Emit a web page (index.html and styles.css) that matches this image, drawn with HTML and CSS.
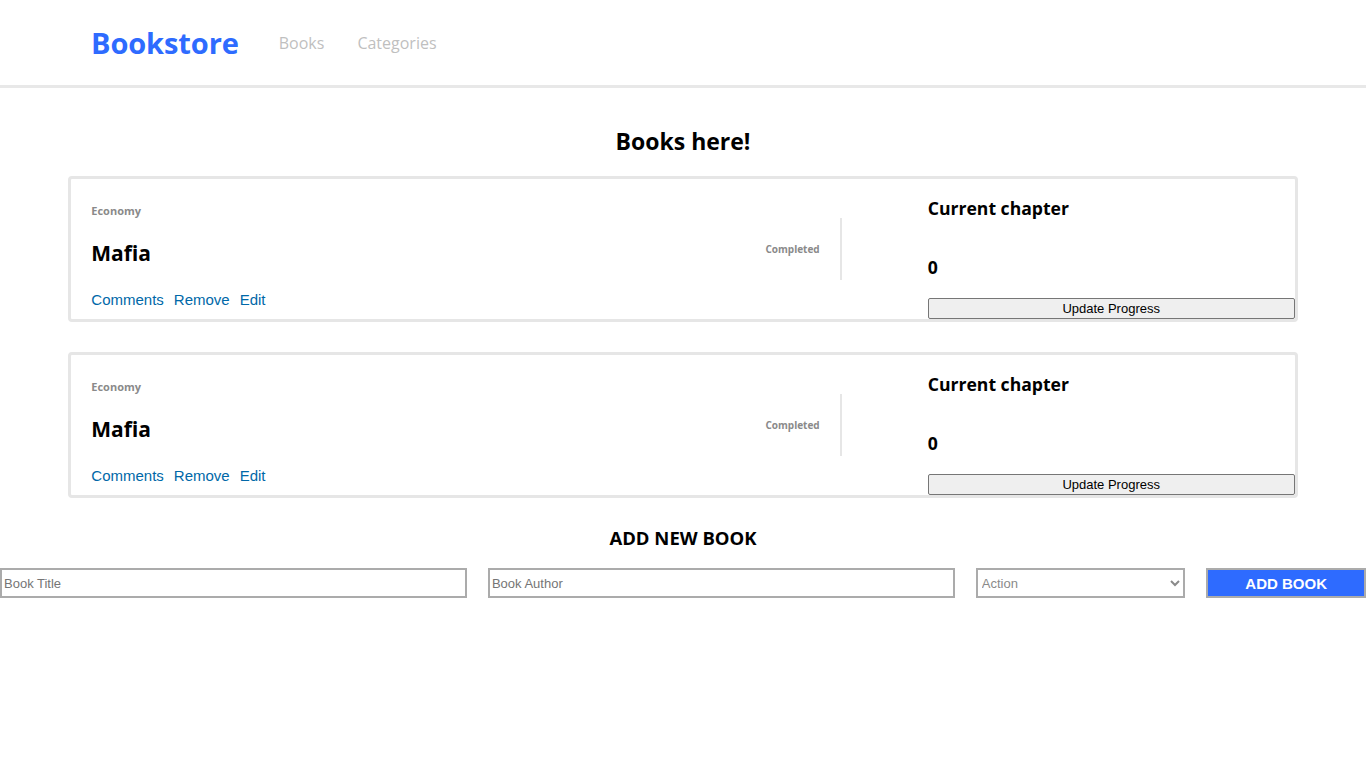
FILE: index.html
```html
<!DOCTYPE html>
<html lang="en">
<head>
<meta charset="utf-8">
<title>Bookstore</title>
<link rel="stylesheet" href="styles.css">
</head>
<body>
<header class="header">
  <a class="logo" href="#">Bookstore</a>
  <nav class="nav">
    <a href="#">Books</a>
    <a href="#">Categories</a>
  </nav>
</header>
<main class="main">
  <h1 class="page-title">Books here!</h1>
  <ul class="book-list">
    <li class="book">
      <div class="book-info">
        <span class="category">Economy</span>
        <h2 class="book-title">Mafia</h2>
        <div class="actions">
          <a href="#">Comments</a>
          <a href="#">Remove</a>
          <a href="#">Edit</a>
        </div>
      </div>
      <div class="status">Completed</div>
      <div class="divider"></div>
      <div class="chapter">
        <h3 class="chapter-label">Current chapter</h3>
        <p class="chapter-num">0</p>
        <button class="update-btn" type="button">Update Progress</button>
      </div>
    </li>
    <li class="book">
      <div class="book-info">
        <span class="category">Economy</span>
        <h2 class="book-title">Mafia</h2>
        <div class="actions">
          <a href="#">Comments</a>
          <a href="#">Remove</a>
          <a href="#">Edit</a>
        </div>
      </div>
      <div class="status">Completed</div>
      <div class="divider"></div>
      <div class="chapter">
        <h3 class="chapter-label">Current chapter</h3>
        <p class="chapter-num">0</p>
        <button class="update-btn" type="button">Update Progress</button>
      </div>
    </li>
  </ul>
  <section class="add-book">
    <h2 class="add-title">ADD NEW BOOK</h2>
    <form class="add-form">
      <input class="field field-title" type="text" placeholder="Book Title">
      <input class="field field-author" type="text" placeholder="Book Author">
      <select class="field field-select">
        <option value="" selected>Action</option>
        <option>Economy</option>
        <option>Fiction</option>
      </select>
      <button class="add-btn" type="button">ADD BOOK</button>
    </form>
  </section>
</main>
</body>
</html>
```

FILE: styles.css
```css
* {
  box-sizing: border-box;
}

body {
  margin: 0;
  font-family: "Open Sans", "DejaVu Sans", sans-serif;
  color: #000;
  background: #fff;
}

.header {
  display: flex;
  align-items: center;
  height: 88px;
  padding: 0 0 0 91px;
  border-bottom: 3px solid #e8e8e8;
}

.logo {
  font-size: 29px;
  font-weight: 700;
  color: #2e6bff;
  text-decoration: none;
  letter-spacing: -0.1px;
}

.nav {
  display: flex;
  gap: 33px;
  margin-left: 40px;
}

.nav a {
  font-size: 16px;
  color: #bfbfbf;
  text-decoration: none;
}

.main {
  padding-top: 39px;
}

.page-title {
  margin: 0 0 21px;
  text-align: center;
  font-size: 23px;
  line-height: 28px;
  font-weight: 700;
}

.book-list {
  list-style: none;
  margin: 0 auto;
  padding: 0;
  width: 90%;
  display: flex;
  flex-direction: column;
  gap: 30px;
}

.book {
  display: flex;
  align-items: center;
  height: 146px;
  border: 3px solid #e6e6e6;
  border-radius: 4px;
  padding-left: 20px;
}

.book-info {
  flex: 1;
  display: flex;
  flex-direction: column;
  align-self: stretch;
  padding-top: 25px;
}

.category {
  font-size: 11px;
  line-height: 14px;
  font-weight: 700;
  color: #8a8a8a;
}

.book-title {
  margin: 21px 0 0;
  font-size: 21px;
  line-height: 28px;
  font-weight: 700;
}

.actions {
  display: flex;
  gap: 10px;
  margin-top: 24px;
}

.actions a {
  font-family: "Liberation Sans", Arial, sans-serif;
  font-size: 15px;
  color: #0068a8;
  text-decoration: none;
}

.status {
  font-size: 10px;
  font-weight: 700;
  color: #8a8a8a;
  margin-right: 20px;
}

.divider {
  width: 2px;
  height: 62px;
  background: #e6e6e6;
}

.chapter {
  align-self: stretch;
  width: 367px;
  margin-left: 86px;
  display: flex;
  flex-direction: column;
  padding-top: 17px;
}

.chapter-label {
  margin: 0;
  font-size: 17.6px;
  line-height: 24px;
  font-weight: 700;
}

.chapter-num {
  margin: 35px 0 0;
  font-size: 17.6px;
  line-height: 24px;
  font-weight: 700;
}

.update-btn {
  margin-top: auto;
  height: 21px;
  width: 100%;
  padding: 0;
  font-family: "Liberation Sans", Arial, sans-serif;
  font-size: 13px;
  color: #000;
  background: #efefef;
  border: 1px solid #767676;
  border-radius: 2px;
}

.add-book {
  padding-top: 28px;
}

.add-title {
  margin: 0 0 18px;
  text-align: center;
  font-size: 18.5px;
  line-height: 24px;
  font-weight: 700;
}

.add-form {
  display: flex;
  gap: 21px;
}

.field {
  height: 30px;
  border: 2px solid #ababab;
  border-radius: 0;
  font-family: "Liberation Sans", Arial, sans-serif;
  font-size: 13px;
  padding: 0 2px;
  color: #000;
  background: #fff;
}

.field::placeholder {
  color: #757575;
}

.field-title,
.field-author {
  width: 468px;
}

.field-select {
  width: 210px;
  padding-left: 0;
  color: #8a8a8a;
}

.add-btn {
  width: 160px;
  height: 30px;
  background: #2e6bff;
  border: 2px solid #ababab;
  color: #fff;
  font-family: "Liberation Sans", Arial, sans-serif;
  font-size: 15px;
  font-weight: 700;
  border-radius: 0;
}
```
